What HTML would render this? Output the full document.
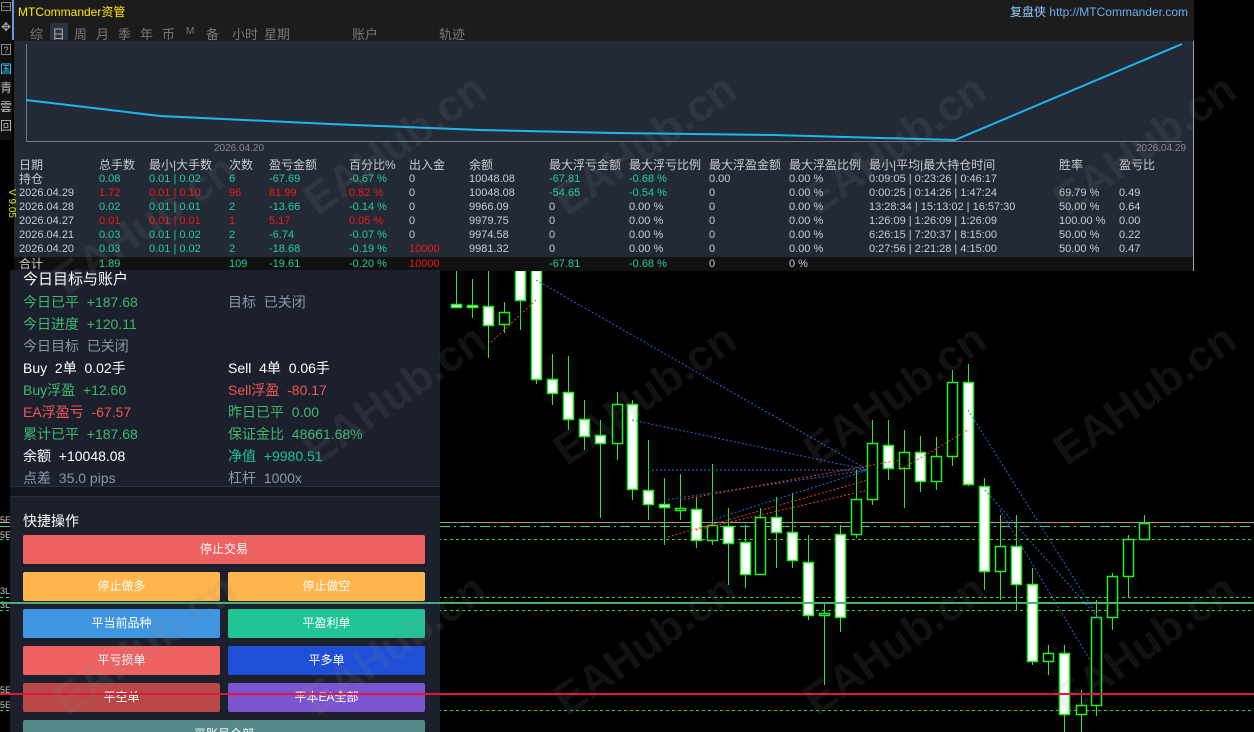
<!DOCTYPE html>
<html><head><meta charset="utf-8"><style>
*{margin:0;padding:0;box-sizing:border-box}
body{width:1254px;height:732px;background:#000;overflow:hidden;position:relative;font-family:"Liberation Sans","Noto Sans CJK SC",sans-serif}
.abs{position:absolute}
#top{left:14px;top:0;width:1180px;height:271px;background:#232a35;border-right:1px solid #9aa;}
#bar{left:0;top:0;width:1180px;height:41px;background:#1c1c1c}
.tab{position:absolute;top:24px;font-size:13px;color:#777;}
.t{position:absolute;font-size:12px;color:#c8ccd2;white-space:nowrap;line-height:14px}
.g{color:#1ecf9a}.r{color:#f01818}
#lp{left:10px;top:270px;width:430px;height:462px;background:#1b202c;overflow:hidden}
.l{position:absolute;font-size:14px;white-space:nowrap;line-height:18px}
.btn{position:absolute;height:29px;border-radius:2px;color:#fff;font-size:12px;text-align:center;line-height:29px}
.wm{position:absolute;z-index:10;font-size:44px;font-weight:bold;color:rgba(140,140,140,0.13);transform:rotate(-35deg);white-space:nowrap;font-family:"Liberation Sans",sans-serif}
</style></head><body>
<svg class="abs" style="left:0;top:0" width="1254" height="732">
<g stroke="#22dd22" stroke-width="1" stroke-dasharray="3,3">
<line x1="0" y1="539.5" x2="1254" y2="539.5"/><line x1="0" y1="597.5" x2="1254" y2="597.5"/><line x1="0" y1="610.5" x2="1254" y2="610.5"/><line x1="0" y1="710.5" x2="1254" y2="710.5"/></g>
<line x1="0" y1="522.5" x2="1254" y2="522.5" stroke="#999"/>
<line x1="0" y1="526.5" x2="1254" y2="526.5" stroke="#3c9" stroke-dasharray="10,4,2,4"/>
<g id="c"></g>
<g stroke="#1e6fd0" stroke-width="1" stroke-dasharray="2,2" fill="none">
<path d="M536 280 L868 470"/><path d="M632 420 L868 470"/><path d="M648 470 L868 470"/><path d="M664 500 L868 470"/><path d="M712 520 L868 470"/><path d="M968 410 L1100 620"/><path d="M985 490 L1100 620"/><path d="M1000 510 L1090 660"/></g>
<g stroke="#e84020" stroke-width="1" stroke-dasharray="2,2" fill="none">
<path d="M664 538 L868 480"/><path d="M696 530 L868 490"/><path d="M680 500 L900 460"/><path d="M900 470 L968 430"/><path d="M488 345 L536 300"/></g>
</svg>
<div class="wm" style="left:40px;top:200px">EAHub.cn</div>
<div class="wm" style="left:290px;top:120px">EAHub.cn</div>
<div class="wm" style="left:540px;top:120px">EAHub.cn</div>
<div class="wm" style="left:790px;top:120px">EAHub.cn</div>
<div class="wm" style="left:1040px;top:120px">EAHub.cn</div>
<div class="wm" style="left:540px;top:370px">EAHub.cn</div>
<div class="wm" style="left:790px;top:370px">EAHub.cn</div>
<div class="wm" style="left:1040px;top:370px">EAHub.cn</div>
<div class="wm" style="left:540px;top:620px">EAHub.cn</div>
<div class="wm" style="left:790px;top:620px">EAHub.cn</div>
<div class="wm" style="left:1040px;top:620px">EAHub.cn</div>
<div class="wm" style="left:290px;top:370px">EAHub.cn</div>
<div class="wm" style="left:40px;top:620px">EAHub.cn</div>
<div class="wm" style="left:290px;top:620px">EAHub.cn</div>

<div id="top" class="abs">
<div id="bar" class="abs"></div>
<div class="abs" style="left:4px;top:3px;font-size:12px;color:#ffe600">MTCommander资管</div>
<div class="abs" style="right:5px;top:3px;font-size:12px;color:#8fc8ff">复盘侠 <span style="color:#6aaef0">http://MTCommander.com</span></div>
<div class="abs" style="left:36px;top:23px;width:18px;height:17px;background:#2c3340"></div>
<span class="tab" style="left:16px">综</span><span class="tab" style="left:38px;color:#aaa">日</span><span class="tab" style="left:60px">周</span><span class="tab" style="left:82px">月</span><span class="tab" style="left:104px">季</span><span class="tab" style="left:126px">年</span><span class="tab" style="left:148px">币</span><span class="tab" style="left:172px;font-size:10px;top:26px">M</span><span class="tab" style="left:192px">备</span><span class="tab" style="left:218px">小时</span><span class="tab" style="left:250px">星期</span><span class="tab" style="left:338px">账户</span><span class="tab" style="left:425px">轨迹</span>
<svg class="abs" style="left:0;top:41px" width="1180" height="120">
<line x1="12.5" y1="3" x2="12.5" y2="100" stroke="#778"/><line x1="12" y1="100.5" x2="1168" y2="100.5" stroke="#778"/>
<polyline points="12,59 146,75 316,83 466,89 600,92 760,94 941,99 1168,3" fill="none" stroke="#19b8f0" stroke-width="2"/>
</svg>
<div class="t" style="left:200px;top:142px;font-size:10px;color:#889">2026.04.20</div>
<div class="t" style="left:1122px;top:142px;font-size:10px;color:#889">2026.04.29</div>
<div class="abs" style="left:0;top:257px;width:1179px;height:14px;background:#111"></div>
<div id="tbl"></div>
</div>

<div class="abs" style="left:0;top:0;width:12px;height:140px;background:#111"></div>
<div class="abs" style="left:12px;top:0;width:2px;height:40px;background:#5aa0e0"></div>
<div class="abs" style="left:1px;top:2px;width:10px;height:9px;border:1px solid #888;color:#aaa;font-size:8px;line-height:8px">—</div>
<div class="abs" style="left:1px;top:20px;color:#aaa;font-size:12px">✥</div>
<div class="abs" style="left:1px;top:44px;width:10px;height:11px;border:1px solid #888;color:#aaa;font-size:9px;line-height:10px;text-align:center">?</div>
<div class="abs" style="left:0;top:60px;color:#3cf;font-size:12px">国</div>
<div class="abs" style="left:0;top:79px;color:#bbb;font-size:12px">青</div>
<div class="abs" style="left:0;top:98px;color:#bbb;font-size:12px">雲</div>
<div class="abs" style="left:0;top:117px;color:#bbb;font-size:12px">回</div>
<div class="abs" style="left:-3px;top:198px;color:#ee0;font-size:10px;transform:rotate(90deg)">V 9.05</div>
<div class="abs" style="left:0;top:515px;color:#ccc;font-size:9px">5E</div>
<div class="abs" style="left:0;top:530px;color:#ccc;font-size:9px">5E</div>
<div class="abs" style="left:0;top:586px;color:#ccc;font-size:9px">3L</div>
<div class="abs" style="left:0;top:600px;color:#ccc;font-size:9px">3L</div>
<div class="abs" style="left:0;top:685px;color:#ccc;font-size:9px">5E</div>
<div class="abs" style="left:0;top:700px;color:#ccc;font-size:9px">5E</div>

<div id="lp" class="abs">
<div class="abs" style="left:0;top:216px;width:430px;height:11px;background:#12161e;border-top:1px solid #2a3140;border-bottom:1px solid #2a3140"></div>
<div class="l" style="left:13px;top:1px;color:#fff;font-size:15px">今日目标与账户</div>
<div class="l" style="left:13px;top:23px;color:#3fb86f">今日已平 &nbsp;+187.68</div>
<div class="l" style="left:218px;top:23px;color:#8a96a8">目标 &nbsp;已关闭</div>
<div class="l" style="left:13px;top:45px;color:#3fb86f">今日进度 &nbsp;+120.11</div>
<div class="l" style="left:13px;top:67px;color:#8a96a8">今日目标 &nbsp;已关闭</div>
<div class="l" style="left:13px;top:89px;color:#fff">Buy &nbsp;2单 &nbsp;0.02手</div>
<div class="l" style="left:218px;top:89px;color:#fff">Sell &nbsp;4单 &nbsp;0.06手</div>
<div class="l" style="left:13px;top:111px;color:#3fb86f">Buy浮盈 &nbsp;+12.60</div>
<div class="l" style="left:218px;top:111px;color:#ef5555">Sell浮盈 &nbsp;-80.17</div>
<div class="l" style="left:13px;top:133px;color:#ef5555">EA浮盈亏 &nbsp;-67.57</div>
<div class="l" style="left:218px;top:133px;color:#3fb86f">昨日已平 &nbsp;0.00</div>
<div class="l" style="left:13px;top:155px;color:#3fb86f">累计已平 &nbsp;+187.68</div>
<div class="l" style="left:218px;top:155px;color:#3fb86f">保证金比 &nbsp;48661.68%</div>
<div class="l" style="left:13px;top:177px;color:#fff">余额 &nbsp;+10048.08</div>
<div class="l" style="left:218px;top:177px;color:#1ec39a">净值 &nbsp;+9980.51</div>
<div class="l" style="left:13px;top:199px;color:#8a96a8">点差 &nbsp;35.0 pips</div>
<div class="l" style="left:218px;top:199px;color:#8a96a8">杠杆 &nbsp;1000x</div>
<div class="l" style="left:13px;top:242px;color:#fff;font-size:14px">快捷操作</div>
<div class="btn" style="left:13px;top:265px;width:402px;background:#ef6262">停止交易</div>
<div class="btn" style="left:13px;top:302px;width:197px;background:#ffb54b">停止做多</div>
<div class="btn" style="left:218px;top:302px;width:197px;background:#ffb54b">停止做空</div>
<div class="btn" style="left:13px;top:339px;width:197px;background:#3f95e0">平当前品种</div>
<div class="btn" style="left:218px;top:339px;width:197px;background:#20c497">平盈利单</div>
<div class="btn" style="left:13px;top:376px;width:197px;background:#ef6262">平亏损单</div>
<div class="btn" style="left:218px;top:376px;width:197px;background:#1f4fd6">平多单</div>
<div class="btn" style="left:13px;top:413px;width:197px;background:#b84848">平空单</div>
<div class="btn" style="left:218px;top:413px;width:197px;background:#7b55d0">平本EA全部</div>
<div class="btn" style="left:13px;top:450px;width:402px;background:#568a8a">平账号全部</div>
</div>
<div class="abs" style="left:0;top:602px;width:1254px;height:2px;background:#4caf70"></div>
<div class="abs" style="left:0;top:693px;width:1254px;height:2px;background:#e0143c"></div>

<script>
var C=[[456,304,307,0,270,308],[472,305,307,0,279,318],[488,306,325,0,270,358],[504,312,324,1,302,333],[520,270,300,0,270,330],[536,270,379,0,270,384],[552,379,393,0,354,405],[568,392,419,0,356,430],[584,419,436,0,400,450],[600,435,443,0,420,518],[617,404,443,1,392,460],[632,404,489,0,400,500],[648,490,504,0,440,520],[664,504,507,0,478,545],[680,508,510,1,474,520],[696,509,540,0,497,548],[712,525,540,1,464,545],[728,526,543,0,508,585],[745,542,574,0,525,588],[760,517,574,1,508,570],[776,517,532,0,497,568],[792,532,560,0,493,568],[808,562,615,0,535,620],[824,613,615,1,603,685],[840,534,617,0,525,632],[856,499,534,1,470,538],[872,443,499,1,420,505],[888,445,468,0,420,480],[904,452,468,1,430,508],[920,452,481,0,436,492],[936,456,481,1,437,490],[952,382,456,1,370,466],[968,382,484,0,364,486],[984,486,571,0,478,590],[1000,546,571,1,515,600],[1016,546,584,0,515,610],[1032,584,661,0,568,665],[1048,653,661,1,645,675],[1064,653,714,0,645,732],[1081,705,714,1,690,732],[1096,617,705,1,600,716],[1112,576,617,1,573,630],[1128,539,576,1,535,597],[1144,523,539,1,515,540]];
var s='';C.forEach(function(c){var x=c[0]+0.5;s+='<line x1="'+x+'" y1="'+c[4]+'" x2="'+x+'" y2="'+c[5]+'" stroke="#22ee22"/>';var h=Math.max(2,c[2]-c[1]);s+='<rect x="'+(x-5)+'" y="'+(c[1]+0.5)+'" width="10" height="'+h+'" fill="'+(c[3]?'#000':'#fff')+'" stroke="#22ee22" stroke-width="1.5"/>';});
document.getElementById('c').innerHTML=s;
var cols=[5,85,135,215,255,335,395,455,535,615,695,775,855,1045,1105];
var rows=[["日期","总手数","最小|大手数","次数","盈亏金额","百分比%","出入金","余额","最大浮亏金额","最大浮亏比例","最大浮盈金额","最大浮盈比例","最小|平均|最大持仓时间","胜率","盈亏比"],
["持仓","g0.08","g0.01 | 0.02","g6","g-67.69","g-0.67 %","0","10048.08","g-67.81","g-0.68 %","0.00","0.00 %","0:09:05 | 0:23:26 | 0:46:17","",""],
["2026.04.29","r1.72","r0.01 | 0.10","r96","r81.99","r0.82 %","0","10048.08","g-54.65","g-0.54 %","0","0.00 %","0:00:25 | 0:14:26 | 1:47:24","69.79 %","0.49"],
["2026.04.28","g0.02","g0.01 | 0.01","g2","g-13.66","g-0.14 %","0","9966.09","0","0.00 %","0","0.00 %","13:28:34 | 15:13:02 | 16:57:30","50.00 %","0.64"],
["2026.04.27","r0.01","r0.01 | 0.01","r1","r5.17","r0.05 %","0","9979.75","0","0.00 %","0","0.00 %","1:26:09 | 1:26:09 | 1:26:09","100.00 %","0.00"],
["2026.04.21","g0.03","g0.01 | 0.02","g2","g-6.74","g-0.07 %","0","9974.58","0","0.00 %","0","0.00 %","6:26:15 | 7:20:37 | 8:15:00","50.00 %","0.22"],
["2026.04.20","g0.03","g0.01 | 0.02","g2","g-18.68","g-0.19 %","r10000","9981.32","0","0.00 %","0","0.00 %","0:27:56 | 2:21:28 | 4:15:00","50.00 %","0.47"],
["合计","g1.89","","g109","g-19.61","g-0.20 %","r10000","","g-67.81","g-0.68 %","0","0 %","","",""]];
var ys=[158,172,186,200,214,228,242,257];var h='';
rows.forEach(function(r,i){r.forEach(function(v,j){if(!v)return;var cl='';if(v[0]=='g'&&i>0){cl='g';v=v.slice(1)}else if(v[0]=='r'&&i>0&&j>0){cl='r';v=v.slice(1)}
var fs=(i==0||j==0&&(i==1||i==7))?12:11;h+='<div class="t '+cl+'" style="left:'+cols[j]+'px;top:'+ys[i]+'px;font-size:'+fs+'px">'+v+'</div>';});});
document.getElementById('tbl').innerHTML=h;
</script>
</body></html>
